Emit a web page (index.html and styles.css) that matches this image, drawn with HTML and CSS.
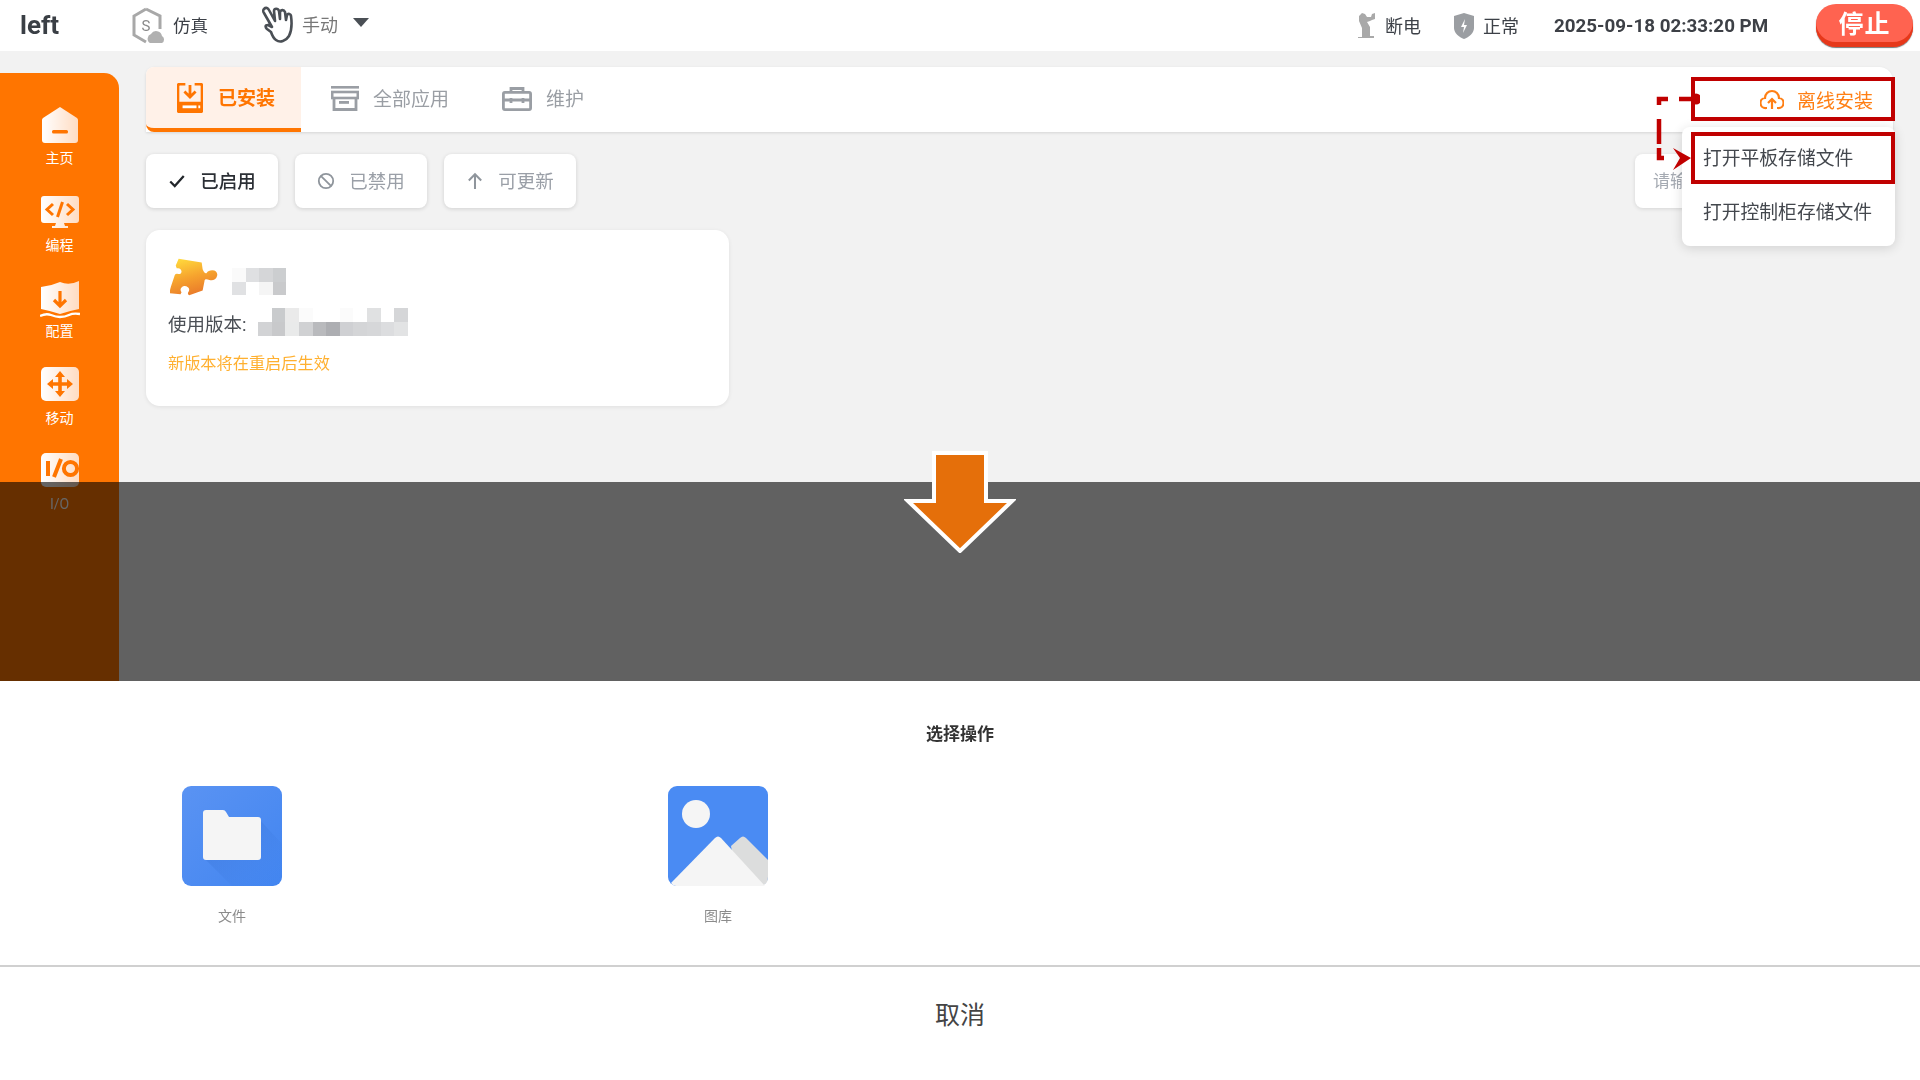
FILE: index.html
```html
<!DOCTYPE html>
<html lang="zh">
<head>
<meta charset="utf-8">
<title>left</title>
<link rel="stylesheet" href="styles.css">
</head>
<body>
<svg class="defs" width="0" height="0" aria-hidden="true">
  <defs>
    <linearGradient id="nav" x1="0" y1="0" x2="1" y2="0"><stop offset="0" stop-color="#ffffff"/><stop offset="1" stop-color="#ffdcc2"/></linearGradient>
    <linearGradient id="puzzle" x1="0.25" y1="0" x2="0.6" y2="1"><stop offset="0" stop-color="#ffd83c"/><stop offset="0.5" stop-color="#f6a32e"/><stop offset="1" stop-color="#e8772a"/></linearGradient>
    <linearGradient id="fold" x1="0" y1="0" x2="1" y2="1"><stop offset="0" stop-color="#5a93f3"/><stop offset="1" stop-color="#4285f0"/></linearGradient>
    <linearGradient id="foldshade" x1="0" y1="0" x2="1" y2="1"><stop offset="0" stop-color="#2f66c4" stop-opacity=".45"/><stop offset="1" stop-color="#4285f0" stop-opacity="0"/></linearGradient>
  </defs>
</svg>
<div class="app">
  <header class="topbar">
    <div class="brand">left</div>
    <div class="mode">
      <svg class="i-sim" viewBox="0 0 34 38"><path d="M15 2 29 9v13M15 2 3 9v19l12 7" fill="none" stroke="#a8a8a8" stroke-width="3"/><text x="15" y="24" class="sim-s">S</text><path d="M19 36a5 5 0 0 1 1-9 6 6 0 0 1 11 2 4 4 0 0 1 0 7z" fill="#b0b0b0"/></svg>
      <span>仿真</span>
    </div>
    <div class="hand">
      <svg class="i-hand" viewBox="0 0 34 38"><path d="M4 4c2-2 4-1 5 1l6 11-1-10c0-3 4-3 5 0l1 8 0-7c1-3 4-2 5 0l1 8 1-5c1-2 4-1 4 1 1 7 1 14-2 20-3 5-9 7-13 4-3-2-4-5-5-8l-4-3c-2-2-2-4 1-4l4 2L4 8C3 7 3 5 4 4z" fill="#fff" stroke="#4a4f55" stroke-width="2.6" stroke-linejoin="round"/></svg>
      <span>手动</span>
      <i class="caret"></i>
    </div>
    <div class="status">
      <div class="stat">
        <svg class="i-robot" viewBox="0 0 20 28"><path d="M2 27v-2h4v-9L3 9V4l3-3 3 1 2 3h4l1-3 3-1v6l-3 1-2 1-3 1 3 5v9h4v2H2z" fill="#a9a9a9"/></svg>
        <span>断电</span>
      </div>
      <div class="stat">
        <svg class="i-shield" viewBox="0 0 20 26"><path d="M10 0l10 3v12c0 5-5 9-10 11C5 24 0 20 0 15V3z" fill="#9b9ea2"/><path d="M11 6l-4 8h3l-1 6 4-8h-3z" fill="#fff"/></svg>
        <span>正常</span>
      </div>
      <div class="clock">2025-09-18 02:33:20 PM</div>
      <button class="stop">停止</button>
    </div>
  </header>

  <div class="workspace">
    <nav class="sidebar">
      <div class="nav-item">
        <svg viewBox="0 0 40 38"><path d="M20 2 37 13q1 1 1 2v20q0 3-3 3H5q-3 0-3-3V15q0-1 1-2z" fill="url(#nav)"/><rect x="12" y="25" width="16" height="3.4" rx="1.5" fill="#ff7500"/></svg>
        <span>主页</span>
      </div>
      <div class="nav-item">
        <svg viewBox="0 0 40 38"><path d="M4 4h32q3 0 3 3v21q0 3-3 3H24l1 3h3v2H12v-2h3l1-3H4q-3 0-3-3V7q0-3 3-3z" fill="url(#nav)"/><path d="M13 12l-6 5.500 6 5.500M27 12l6 5.500-6 5.500" fill="none" stroke="#ff7500" stroke-width="3"/><path d="M22.500 10l-5 15" stroke="#ff7500" stroke-width="3"/></svg>
        <span>编程</span>
      </div>
      <div class="nav-item">
        <svg class="tall" viewBox="0 0 40 42"><path d="M1 7q10-1 19-5 9 4 19-1v28q-10 2-19 5Q11 31 1 29z" fill="url(#nav)"/><path d="M20 11v14M14 20l6 6 6-6" fill="none" stroke="#ff7500" stroke-width="3.200"/><path d="M0 36q6-3 11-1t9 2q5 0 9-2t11-1" fill="none" stroke="#fff" stroke-width="2.400"/></svg>
        <span>配置</span>
      </div>
      <div class="nav-item">
        <svg viewBox="0 0 40 38"><rect x="1" y="2" width="38" height="34" rx="5" fill="url(#nav)"/><path d="M20 6l5 6h-3.200v5.200H27V14l6 5-6 5v-3.200h-5.200V26H25l-5 6-5-6h3.200v-5.200H13V24l-6-5 6-5v3.200h5.200V12H15z" fill="#ff7500"/></svg>
        <span>移动</span>
      </div>
      <div class="nav-item">
        <svg viewBox="0 0 40 38"><rect x="1" y="2" width="38" height="34" rx="5" fill="url(#nav)"/><path d="M8 10v15M21 8l-7 18" stroke="#ff7500" stroke-width="4" fill="none"/><circle cx="30.500" cy="17.500" r="6.600" fill="none" stroke="#ff7500" stroke-width="4"/></svg>
        <span>I/O</span>
      </div>
    </nav>

    <main class="content">
      <div class="tabbar">
        <div class="tab tab-active">
          <svg class="i-tab i-save" viewBox="0 0 28 32"><path d="M9 1H3Q1 1 1 3v26q0 2 2 2h22q2 0 2-2V3q0-2-2-2h-6" fill="none" stroke="#ff7500" stroke-width="3"/><path d="M1 20h26v9q0 2-2 2H3q-2 0-2-2z" fill="#ff7500"/><path d="M14 2v12M8 9l6 6 6-6" fill="none" stroke="#ff7500" stroke-width="3"/><rect x="6" y="24" width="15" height="3" fill="#fff"/><rect x="23" y="24" width="2" height="3" fill="#fff"/></svg>
          <span>已安装</span>
        </div>
        <div class="tab">
          <svg class="i-tab i-box" viewBox="0 0 28 25"><rect width="28" height="2.600" fill="#9a9ea4"/><rect x="1.200" y="6" width="25.600" height="6" fill="none" stroke="#9a9ea4" stroke-width="2.600"/><path d="M3 12v11.500h22V12" fill="none" stroke="#9a9ea4" stroke-width="2.800"/><rect x="8" y="15" width="10" height="2.800" fill="#9a9ea4"/></svg>
          <span>全部应用</span>
        </div>
        <div class="tab">
          <svg class="i-tab i-kit" viewBox="0 0 30 24"><path d="M9 5V1.500h12V5" fill="none" stroke="#9a9ea4" stroke-width="2.800"/><rect x="1.400" y="5.400" width="27.200" height="17.200" rx="1.500" fill="none" stroke="#9a9ea4" stroke-width="2.800"/><path d="M1 13h28M9 11v5M21 11v5" stroke="#9a9ea4" stroke-width="2.800"/></svg>
          <span>维护</span>
        </div>
        <div class="install">
          <svg class="i-cloud" viewBox="0 0 24 22"><path d="M7 20H6a5 5 0 0 1-1-10 7 7 0 0 1 14 0 5 5 0 0 1-1 10h-1" fill="none" stroke="#ff7f14" stroke-width="2.200"/><path d="M12 21v-9M8 15l4-4 4 4" fill="none" stroke="#ff7f14" stroke-width="2.200"/></svg>
          <span>离线安装</span>
        </div>
      </div>

      <div class="filters">
        <button class="chip chip-on">
          <svg viewBox="0 0 16 16"><path d="M2 8.500l4 4 8-9" fill="none" stroke="#22262b" stroke-width="2"/></svg>
          <span>已启用</span>
        </button>
        <button class="chip">
          <svg viewBox="0 0 20 20"><circle cx="10" cy="10" r="8" fill="none" stroke="#8f959c" stroke-width="2"/><path d="M4.500 4.500l11 11" stroke="#8f959c" stroke-width="2"/></svg>
          <span>已禁用</span>
        </button>
        <button class="chip">
          <svg viewBox="0 0 16 16"><path d="M8 15V2M2.500 7.500 8 2l5.500 5.500" fill="none" stroke="#8f959c" stroke-width="1.800"/></svg>
          <span>可更新</span>
        </button>
        <div class="search">请输入</div>
      </div>

      <section class="card">
        <div class="card-head">
          <svg class="i-puzzle" viewBox="0 0 50 38"><path d="M9 0l24 4 1 7q2 5 4 4 2-3 6-3c4 0 6 3 5 6-1 4-5 5-8 4-3-1-5-1-5 1l-2 10-14 5q-2-1-1-3 2-3 0-5-4-3-7 0-2 2 0 5l-1 2-11-1Q-1 36 1 29l4-12q1-2 4-1 3 0 3-3-1-4-5-3L6 7z" fill="url(#puzzle)"/></svg>
          <svg class="mosaic-a" viewBox="0 0 4 2" shape-rendering="crispEdges"><rect width="1" height="1" fill="#fafafa"/><rect x="1" width="1" height="1" fill="#dfe0e2"/><rect x="2" width="1" height="1" fill="#d5d6d8"/><rect x="3" width="1" height="1" fill="#ccced0"/><rect y="1" width="1" height="1" fill="#e0e1e3"/><rect x="2" y="1" width="1" height="1" fill="#f5f5f5"/><rect x="3" y="1" width="1" height="1" fill="#c9cacc"/></svg>
        </div>
        <div class="version">
          <span>使用版本:</span>
          <svg class="mosaic-b" viewBox="0 0 11 2" shape-rendering="crispEdges"><rect x="1" width="1" height="1" fill="#c9cbcd"/><rect x="2" width="1" height="1" fill="#eaeaea"/><rect x="3" width="1" height="1" fill="#fbfbfb"/><rect x="6" width="1" height="1" fill="#fbfbfb"/><rect x="8" width="1" height="1" fill="#e0e1e2"/><rect x="10" width="1" height="1" fill="#d5d6d8"/><rect y="1" width="1" height="1" fill="#d2d3d5"/><rect x="1" y="1" width="1" height="1" fill="#c8c9cb"/><rect x="2" y="1" width="1" height="1" fill="#e9eaea"/><rect x="3" y="1" width="1" height="1" fill="#d0d1d3"/><rect x="4" y="1" width="1" height="1" fill="#b9babd"/><rect x="5" y="1" width="1" height="1" fill="#adaeb2"/><rect x="6" y="1" width="1" height="1" fill="#cfd0d3"/><rect x="7" y="1" width="1" height="1" fill="#d4d5d7"/><rect x="8" y="1" width="1" height="1" fill="#d6d7d9"/><rect x="9" y="1" width="1" height="1" fill="#dcdddf"/><rect x="10" y="1" width="1" height="1" fill="#e2e3e4"/></svg>
        </div>
        <div class="notice">新版本将在重启后生效</div>
      </section>
    </main>
  </div>

  <div class="menu">
    <div class="menu-item">打开平板存储文件</div>
    <div class="menu-item">打开控制柜存储文件</div>
  </div>
  <div class="callout callout-top"></div>
  <div class="callout callout-bottom"></div>
  <svg class="connector" viewBox="0 0 44 80">
    <circle cx="40" cy="7" r="5.500" fill="#c00000"/>
    <path d="M36 7H23M12 7H3V13M3 27V52M3 56V66H8" fill="none" stroke="#c00000" stroke-width="4.500"/>
    <path d="M17 56 35 66 17 78 24 66z" fill="#c00000"/>
  </svg>
  <div class="scrim"></div>
  <svg class="arrow" viewBox="0 0 112 102"><path d="M30 2h52v48h26L56 100 4 50h26z" fill="#e56f0a" stroke="#fff" stroke-width="4"/></svg>
</div>

<section class="sheet">
  <h2 class="sheet-title">选择操作</h2>
  <div class="apps">
    <div class="app-tile">
      <svg viewBox="0 0 100 100">
        <rect width="100" height="100" rx="9" fill="url(#fold)"/>
        <path d="M22 72 78 34 100 58v33q0 9-9 9H50z" fill="url(#foldshade)"/>
        <path d="M24 24h17q2 0 3 2l3 5h29q3 0 3 3v37q0 3-3 3H24q-3 0-3-3V27q0-3 3-3z" fill="#f5f5f5"/>
      </svg>
      <span>文件</span>
    </div>
    <div class="app-tile">
      <svg viewBox="0 0 100 100">
        <rect width="100" height="100" rx="9" fill="#4a8bf3"/>
        <ellipse cx="28" cy="28" rx="14" ry="14" fill="#f5f5f5"/>
        <path d="M63 60 72 52q3-3 6 0l22 22v17q0 9-9 9H70z" fill="#dcdddd"/>
        <path d="M3 97 47 52q3-3 6 0l44 48H8q-3 0-5-3z" fill="#f5f5f5"/>
      </svg>
      <span>图库</span>
    </div>
  </div>
  <div class="cancel">取消</div>
</section>
</body>
</html>
```
FILE: styles.css
```css
* { box-sizing: border-box; }
html, body { margin: 0; height: 1080px; overflow: hidden; }
body {
  background: #fff;
  color: #333;
  font-family: Roboto, "Noto Sans CJK SC", sans-serif;
}
.defs { position: absolute; }
button { font: inherit; border: 0; }

.app {
  position: relative;
  height: 681px;
  background: #f2f2f2;
  overflow: hidden;
}

/* top bar */
.topbar {
  display: flex;
  align-items: center;
  height: 51px;
  background: #fff;
  padding-left: 20px;
  filter: blur(.4px);
}
.brand { width: 111px; font-size: 26px; font-weight: 700; color: #3a3f45; margin-top: -1px; }
.mode { display: flex; align-items: center; gap: 8px; width: 129px; font-size: 17.500px; color: #3c4047; }
.mode span { margin-top: -2px; }
.i-sim { width: 34px; height: 38px; }
.sim-s { font: 400 15px Roboto, sans-serif; fill: #8a8a8a; text-anchor: middle; }
.hand { display: flex; align-items: center; font-size: 18px; color: #777; margin-top: -4px; }
.i-hand { width: 34px; height: 38px; margin-right: 8px; }
.caret {
  width: 0; height: 0;
  margin-left: 15px;
  margin-bottom: 2px;
  border: 8px solid transparent;
  border-top: 9px solid #4a4f55;
  border-bottom: 0;
}
.status { display: flex; align-items: center; margin-left: auto; }
.stat { display: flex; align-items: center; gap: 9px; margin-right: 33px; font-size: 18px; color: #3c4047; }
.stat span { margin-top: -2px; }
.stat + .stat { margin-right: 35px; }
.i-robot { width: 20px; height: 28px; }
.i-shield { width: 20px; height: 26px; }
.clock { width: 262px; font-size: 18.800px; font-weight: 700; color: #3d4046; white-space: nowrap; }
.stop {
  width: 97px;
  height: 43px;
  margin-right: 7px;
  border-radius: 20px;
  background: #ff6350;
  box-shadow: inset 0 -5px 0 #e6381a, 0 1px 1px #777;
  color: #fff;
  font-size: 25px;
  font-weight: 700;
  letter-spacing: 1px;
  padding: 0 0 8px;
}

/* layout below top bar */
.workspace { display: flex; align-items: flex-start; filter: blur(.4px); }
.sidebar {
  flex: none;
  width: 119px;
  height: 640px;
  margin-top: 22px;
  padding-top: 32px;
  background: #ff7500;
  border-radius: 0 15px 0 0;
  color: #fff;
}
.nav-item {
  display: flex;
  flex-direction: column;
  align-items: center;
  gap: 5px;
  height: 86.500px;
  font-size: 14px;
  line-height: 20px;
}
.nav-item svg { width: 40px; height: 38px; flex: none; }
.nav-item svg.tall { height: 42px; margin: 2px 0 -6px; }
.content { flex: 1; min-width: 0; padding: 16px 27px 0; }

/* tabs */
.tabbar {
  display: flex;
  align-items: center;
  height: 65px;
  background: #fff;
  border-radius: 8px 14px 0 0;
  box-shadow: 0 1px 3px rgba(0, 0, 0, .12);
  font-size: 19px;
  color: #9a9ea4;
}
.tab { display: flex; align-items: center; gap: 14px; height: 100%; padding: 0 23px 2px 30px; white-space: nowrap; }
.tab span { margin-top: -2px; }
.tab-active {
  width: 155px;
  flex: none;
  gap: 15px;
  background: #fff1e8;
  border-bottom: 4px solid #ff7500;
  border-radius: 8px 0 0 8px;
  color: #ff7500;
  font-weight: 700;
  padding: 0 0 0 31px;
}
.i-tab { width: 28px; height: 25px; flex: none; }
.i-save { width: 26px; height: 30px; }
.i-kit { width: 30px; height: 24px; }
.install {
  display: flex;
  align-items: center;
  gap: 13px;
  margin-left: auto;
  padding-right: 20px;
  padding-bottom: 1px;
  color: #ff7f14;
}
.i-cloud { width: 24px; height: 22px; }

/* filters */
.filters { display: flex; gap: 17px; margin-top: 22px; }
.chip {
  display: flex;
  align-items: center;
  justify-content: center;
  gap: 14px;
  width: 132px;
  height: 54px;
  background: #fff;
  border-radius: 8px;
  box-shadow: 0 1px 4px rgba(0, 0, 0, .14);
  color: #9a9fa7;
  font-size: 18.500px;
}
.chip span { margin-top: -2px; }
.chip svg { width: 18px; height: 18px; }
.chip-on { color: #2b2f35; font-weight: 500; }
.search {
  display: flex;
  align-items: center;
  width: 258px;
  height: 54px;
  margin-left: auto;
  padding: 0 0 4px 18px;
  background: #fff;
  border-radius: 8px;
  box-shadow: 0 1px 4px rgba(0, 0, 0, .12);
  color: #a5aab2;
  font-size: 17px;
}

/* card */
.card {
  width: 583px;
  height: 176px;
  margin-top: 22px;
  padding: 28px 22px 0;
  background: #fff;
  border-radius: 14px;
  box-shadow: 0 1px 4px rgba(0, 0, 0, .08);
}
.card-head { display: flex; align-items: center; gap: 14px; height: 38px; padding-left: 2px; }
.i-puzzle { width: 48px; height: 38px; }
.mosaic-a { width: 54px; height: 27px; margin-top: 8px; }
.version { display: flex; align-items: center; gap: 12px; height: 28px; margin-top: 13px; font-size: 18.500px; color: #4b4f55; }
.mosaic-b { width: 150px; height: 28px; margin-top: -2px; }
.notice { margin-top: 17px; font-size: 16.200px; line-height: 20px; color: #ffb030; }

/* things lying over the page */
.menu {
  position: absolute;
  left: 1682px;
  top: 127px;
  width: 213px;
  height: 119px;
  padding-top: 2px;
  background: #fff;
  border-radius: 8px;
  box-shadow: 0 2px 12px rgba(0, 0, 0, .14);
}
.menu-item { display: flex; align-items: center; height: 54px; padding-left: 21px; font-size: 18.800px; color: #43474d; }
.callout { position: absolute; left: 1691px; width: 204px; border: 4px solid #c00000; }
.callout-top { top: 77px; height: 44px; }
.callout-bottom { top: 132px; height: 52px; }
.connector { position: absolute; left: 1656px; top: 92px; width: 44px; height: 80px; }
.scrim { position: absolute; left: 0; right: 0; top: 482px; bottom: 0; background: rgba(0, 0, 0, .6); }
.arrow { position: absolute; left: 904px; top: 451px; width: 112px; height: 102px; }

/* bottom sheet */
.sheet { display: flex; flex-direction: column; height: 399px; background: #fff; }
.sheet-title {
  margin: 0;
  padding-top: 42px;
  text-align: center;
  font-size: 17px;
  line-height: 22px;
  font-weight: 700;
  color: #333;
  filter: blur(.3px);
}
.apps { display: flex; gap: 368px; height: 221.500px; padding: 41px 0 0 173px; border-bottom: 2px solid #d0d0d0; filter: blur(.4px); }
.app-tile { display: flex; flex-direction: column; align-items: center; gap: 20px; width: 100px; margin: 0 9px; font-size: 14px; line-height: 20px; color: #8b8b8b; }
.app-tile svg { width: 100px; height: 100px; flex: none; }
.cancel { padding-top: 32px; text-align: center; font-size: 25px; line-height: 34px; color: #444; }
```
